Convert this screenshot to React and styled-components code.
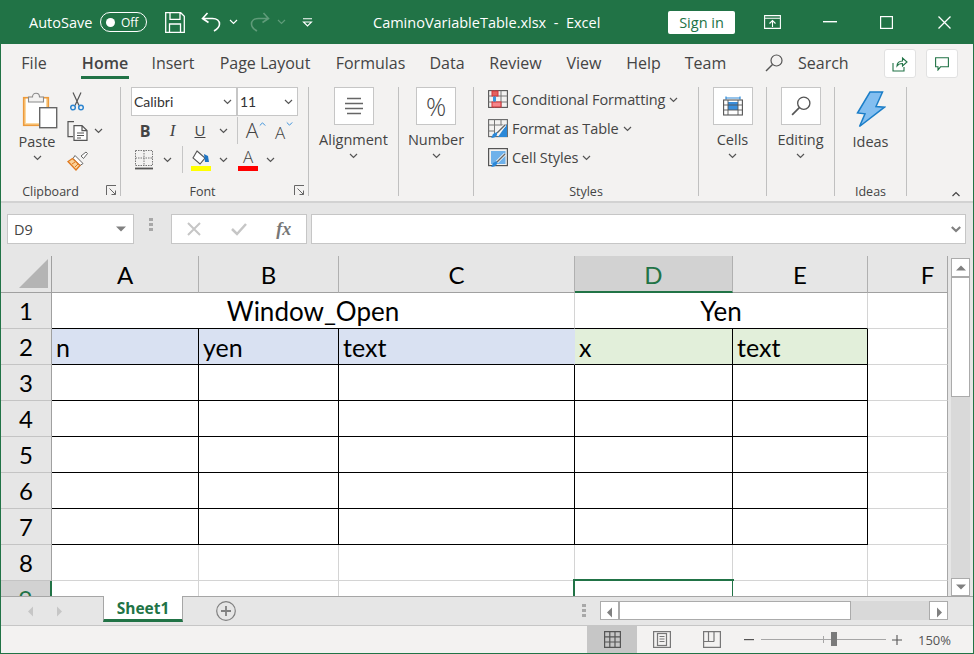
import React from "react";
import styled, { createGlobalStyle } from "styled-components";

const UI_FONT = `"Open Sans", "Noto Sans", "Liberation Sans", sans-serif`;
const CELL_FONT = `Lato, "Open Sans", "Liberation Sans", sans-serif`;
const GREEN = "#217346";
const GRID = "#d4d4d4";

const Global = createGlobalStyle`
  html, body { margin: 0; padding: 0; background: #fff; overflow: hidden; }
  * { box-sizing: border-box; }
`;

const Win = styled.div`
  width: 974px;
  height: 654px;
  display: flex;
  flex-direction: column;
  background: #f3f2f1;
  border-left: 1px solid ${GREEN};
  border-right: 1px solid ${GREEN};
  border-bottom: 1px solid ${GREEN};
  font-family: ${UI_FONT};
  color: #444;
  overflow: hidden;
`;

/* title bar */
const TitleBar = styled.div`
  height: 44px;
  flex: none;
  margin: 0 -1px;
  background: ${GREEN};
  color: #fff;
  display: flex;
  align-items: center;
  padding-left: 29px;
  font-size: 14.5px;
`;
const AutoSave = styled.span`
  width: 71px;
`;
const Toggle = styled.div`
  width: 47px;
  height: 20px;
  border: 1px solid #fff;
  border-radius: 10px;
  display: flex;
  align-items: center;
  padding-left: 5px;
  gap: 6px;
  font-size: 12px;
  margin-right: 14px;
  &::before {
    content: "";
    width: 9px;
    height: 9px;
    border-radius: 50%;
    background: #fff;
  }
`;
const QSlot = styled.div`
  width: ${(p) => p.$w}px;
  display: flex;
  justify-content: center;
  align-items: center;
  flex: none;
`;
const DocTitle = styled.div`
  width: 300px;
  padding-left: 5px;
  white-space: pre;
`;
const SignIn = styled.div`
  width: 67px;
  height: 23px;
  background: #fff;
  color: ${GREEN};
  border-radius: 2px;
  display: flex;
  align-items: center;
  justify-content: center;
  font-size: 14.5px;
`;

/* tabs */
const TabBar = styled.div`
  height: 36px;
  flex: none;
  display: flex;
  align-items: center;
  gap: 24px;
  padding-left: 21px;
  font-size: 16px;
`;
const Tab = styled.div`
  width: ${(p) => p.$w}px;
  height: 36px;
  display: flex;
  justify-content: center;
  align-items: center;
  padding-top: 2px;
  position: relative;
  white-space: nowrap;
  flex: none;
  font-weight: ${(p) => (p.$active ? 600 : 400)};
  margin-right: ${(p) => p.$mr || 0}px;
  ${(p) =>
    p.$active &&
    `&::after {
      content: "";
      position: absolute;
      left: -1px;
      right: -1px;
      bottom: 1px;
      height: 3px;
      background: ${GREEN};
    }`}
`;
const SearchBox = styled.div`
  display: flex;
  align-items: center;
  gap: 15px;
  margin-left: 15px;
  padding-top: 2px;
  width: 95px;
`;
const TabButton = styled.div`
  width: 32px;
  height: 29px;
  background: #fff;
  border: 1px solid #e1e1e1;
  border-radius: 3px;
  display: flex;
  align-items: center;
  justify-content: center;
  flex: none;
  margin-top: 3px;
  margin-left: ${(p) => p.$ml || 0}px;
`;

/* ribbon */
const Ribbon = styled.div`
  height: 123px;
  flex: none;
  display: flex;
  padding-top: 7px;
  border-bottom: 2px solid #d2d2d2;
  font-size: 14.5px;
`;
const Group = styled.div`
  width: ${(p) => p.$w}px;
  height: 109px;
  flex: none;
  border-right: 1px solid #c0c0c0;
  display: flex;
  flex-direction: column;
  position: relative;
`;
const GroupBody = styled.div`
  height: 97px;
  flex: none;
  display: flex;
  padding-left: ${(p) => p.$pl || 0}px;
  flex-direction: ${(p) => (p.$col ? "column" : "row")};
`;
const GroupLabel = styled.div`
  height: 12px;
  font-size: 12.5px;
  line-height: 15px;
  text-align: center;
  white-space: nowrap;
  padding-right: ${(p) => p.$pr || 0}px;
`;
const Launcher = styled.svg`
  position: absolute;
  right: 3px;
  bottom: 0;
`;
const PasteCol = styled.div`
  width: ${(p) => p.$w || "72px"};
  display: flex;
  flex-direction: column;
  align-items: center;
  padding-top: 4px;
  flex: none;
`;
const BigLabel = styled.div`
  line-height: 20px;
  margin-top: ${(p) => p.$mt ?? 3}px;
  white-space: nowrap;
`;
const PasteArt = styled.div`
  margin-left: 5px;
  height: 38px;
`;
const Caret = styled.div`
  height: 12px;
  display: flex;
  align-items: center;
  justify-content: center;
`;
const ClipCol = styled.div`
  display: flex;
  flex-direction: column;
  width: 46px;
  margin-left: -6px;
`;
const ClipRow = styled.div`
  height: 29.5px;
  display: flex;
  align-items: center;
  gap: 6px;
  padding-left: ${(p) => p.$pl || 0}px;
`;
const FontRow = styled.div`
  height: ${(p) => p.$h || 29}px;
  display: flex;
  align-items: center;
`;
const Combo = styled.div`
  width: ${(p) => p.$w}px;
  height: 29px;
  background: #fff;
  border: 1px solid #c6c6c6;
  display: flex;
  align-items: center;
  justify-content: space-between;
  padding: 0 4px 0 2px;
  font-family: ${CELL_FONT};
  font-size: 14px;
  color: #333;
`;
const Slot = styled.div`
  width: ${(p) => p.$w}px;
  height: 29px;
  flex: none;
  display: flex;
  align-items: center;
  justify-content: center;
`;
const GrowSlot = styled(Slot)`
  align-items: flex-end;
  padding-bottom: 4px;
  gap: 1px;
  & > svg {
    align-self: flex-start;
    margin-top: 5px;
  }
`;
const FontGlyph = styled.span`
  font-family: ${(p) => (p.$serif ? `"Liberation Serif", serif` : UI_FONT)};
  font-weight: ${(p) => (p.$bold ? 700 : p.$thin ? 300 : 400)};
  font-style: ${(p) => (p.$italic ? "italic" : "normal")};
  font-size: ${(p) => p.$size || 15}px;
  text-decoration: ${(p) => (p.$under ? "underline" : "none")};
  color: #444;
  line-height: 1;
`;
const ColorSlot = styled(Slot)`
  flex-direction: column;
  justify-content: flex-end;
  gap: 1px;
  padding-bottom: 3px;
`;
const ColorBar = styled.div`
  width: 20px;
  height: 5px;
  flex: none;
  background: ${(p) => p.$c};
`;
const VRule = styled.div`
  width: 1px;
  height: 27px;
  background: #c6c6c6;
  margin: 0 ${(p) => p.$r || 5}px 0 ${(p) => p.$l || 5}px;
  flex: none;
`;
const BigCol = styled.div`
  width: 100%;
  display: flex;
  flex-direction: column;
  align-items: center;
`;
const IconBox = styled.div`
  width: 40px;
  height: 38px;
  background: #fff;
  border: 1px solid #c6c6c6;
  display: flex;
  align-items: center;
  justify-content: center;
  flex: none;
  font-size: 25px;
  font-weight: 300;
  color: #444;
`;
const StyleList = styled.div`
  margin-top: -2px;
  padding-left: 14px;
`;
const StyleRow = styled.div`
  height: 29px;
  display: flex;
  align-items: center;
  gap: 4px;
  white-space: nowrap;
  letter-spacing: -0.1px;
`;
const Collapse = styled.div`
  align-self: flex-end;
  margin-left: 43px;
  margin-bottom: 4px;
  display: flex;
`;

/* formula bar */
const FormulaBar = styled.div`
  height: 53px;
  flex: none;
  background: #e6e6e6;
  display: flex;
  padding: 11px 0 0 6px;
`;
const FBox = styled.div`
  width: ${(p) => p.$w}px;
  height: 30px;
  background: #fff;
  border: 1px solid #c6c6c6;
  display: flex;
  align-items: center;
  flex: none;
  margin-left: ${(p) => p.$ml || 0}px;
`;
const NameBox = styled(FBox)`
  justify-content: space-between;
  padding: 0 6px;
  font-size: 14.5px;
  color: #444;
`;
const FormulaInput = styled(FBox)`
  justify-content: flex-end;
  padding-right: 4px;
`;
const FxSlot = styled.div`
  width: 45px;
  display: flex;
  justify-content: center;
  align-items: center;
  font-family: "Liberation Serif", serif;
  font-style: italic;
  font-weight: 700;
  font-size: 18px;
  color: #777;
`;
const Dots = styled.div`
  width: 5px;
  display: flex;
  flex-direction: column;
  gap: 2px;
  margin: ${(p) => p.$m};
  & > i {
    width: 4px;
    height: 3px;
    background: #a8a8a8;
  }
`;

/* sheet */
const SheetArea = styled.div`
  height: 340px;
  flex: none;
  display: flex;
  background: #e6e6e6;
  overflow: hidden;
`;
const Sheet = styled.div`
  width: 947px;
  flex: none;
  display: grid;
  grid-template-columns: 51px 147px 140px 236px 158px 135px 80px;
  grid-auto-rows: 36px;
  grid-template-rows: 37px;
  font-family: ${CELL_FONT};
  font-size: 24px;
  color: #000;
  background: #fff;
  align-content: start;
`;
const Corner = styled.div`
  background: #e6e6e6;
  border-bottom: 1px solid #a0a0a0;
  border-right: 1px solid #a0a0a0;
  display: flex;
  align-items: flex-end;
  justify-content: flex-end;
  padding: 0 2px 3px 0;
`;
const ColHead = styled.div`
  background: ${(p) => (p.$sel ? "#d2d2d2" : "#e6e6e6")};
  color: ${(p) => (p.$sel ? GREEN : "#000")};
  border-right: 1px solid #b0b0b0;
  border-bottom: ${(p) => (p.$sel ? `2px solid ${GREEN}` : "1px solid #a0a0a0")};
  display: flex;
  align-items: center;
  justify-content: center;
  padding-top: ${(p) => (p.$sel ? 1 : 0)}px;
  ${(p) => p.$last && "padding-left: 40px; border-right: 1px solid #a6a6a6;"}
`;
const RowHead = styled.div`
  background: ${(p) => (p.$sel ? "#d2d2d2" : "#e6e6e6")};
  color: ${(p) => (p.$sel ? GREEN : "#000")};
  border-right: ${(p) => (p.$sel ? `2px solid ${GREEN}` : "1px solid #a0a0a0")};
  border-bottom: 1px solid #c4c4c4;
  display: flex;
  align-items: center;
  justify-content: center;
`;
const Cell = styled.div`
  grid-column: ${(p) => (p.$span ? `span ${p.$span}` : "auto")};
  background: ${(p) => p.$bg || "#fff"};
  border-right: 1px solid ${(p) => p.$r || GRID};
  border-bottom: 1px solid ${(p) => p.$b || GRID};
  display: flex;
  align-items: center;
  justify-content: ${(p) => (p.$center ? "center" : "flex-start")};
  padding-left: ${(p) => (p.$center ? 0 : 4)}px;
  font-size: ${(p) => (p.$center ? 26 : 25)}px;
  white-space: nowrap;
  position: relative;
  ${(p) => p.$edge && "border-right: 1px solid #a6a6a6;"}
`;
const Selected = styled.div`
  position: absolute;
  left: -2px;
  top: -2px;
  right: -2px;
  bottom: -2px;
  border: 2px solid ${GREEN};
`;
const VScroll = styled.div`
  width: 25px;
  flex: none;
  padding: 2px 3px 0 3px;
  display: flex;
  flex-direction: column;
`;
const ScrollBtn = styled.div`
  width: ${(p) => p.$w || 19}px;
  height: ${(p) => p.$h || 19}px;
  background: #fff;
  border: 1px solid #ababab;
  display: flex;
  align-items: center;
  justify-content: center;
  flex: none;
`;
const VTrack = styled.div`
  height: 302px;
  background: #d9d9d9;
  width: 19px;
`;
const VThumb = styled.div`
  height: 120px;
  background: #fff;
  border: 1px solid #ababab;
`;

/* sheet tabs */
const SheetBar = styled.div`
  height: 30px;
  flex: none;
  background: #e6e6e6;
  border-top: 1px solid #a6a6a6;
  border-bottom: 1px solid #c6c6c6;
  display: flex;
  align-items: flex-start;
`;
const NavArrows = styled.div`
  width: 102px;
  height: 28px;
  display: flex;
  align-items: center;
  gap: 16px;
  padding-left: 24px;
  flex: none;
  padding-bottom: 2px;
`;
const SheetTab = styled.div`
  width: 80px;
  height: 26px;
  margin-top: -1px;
  background: #fff;
  border-left: 1px solid #a6a6a6;
  border-right: 1px solid #a6a6a6;
  border-bottom: 3px solid ${GREEN};
  color: ${GREEN};
  font-weight: 700;
  font-size: 15.5px;
  display: flex;
  align-items: center;
  justify-content: center;
  flex: none;
`;
const AddSheet = styled.div`
  width: 85px;
  display: flex;
  justify-content: center;
  padding-top: 4px;
  flex: none;
`;
const HScroll = styled.div`
  display: flex;
  margin-top: 4px;
  margin-left: ${(p) => p.$ml}px;
`;
const HThumb = styled.div`
  width: 232px;
  height: 19px;
  background: #fff;
  border: 1px solid #ababab;
  flex: none;
`;
const HTrack = styled.div`
  width: 78px;
  height: 19px;
  background: #d9d9d9;
  flex: none;
`;

/* status bar */
const StatusBar = styled.div`
  flex: 1;
  display: flex;
  align-items: center;
  padding-left: 586px;
  font-size: 13px;
  color: #555;
`;
const ViewBtn = styled.div`
  width: 50px;
  height: 100%;
  display: flex;
  align-items: center;
  justify-content: center;
  flex: none;
  background: ${(p) => (p.$on ? "#c6c6c6" : "transparent")};
`;
const ZoomBar = styled.div`
  display: flex;
  align-items: center;
  margin-left: 7px;
`;
const Slider = styled.div`
  width: 125px;
  height: 1px;
  background: #a6a6a6;
  margin: 0 6px 0 7px;
  position: relative;
`;
const SliderTick = styled.i`
  position: absolute;
  left: 62px;
  top: -3px;
  width: 1px;
  height: 7px;
  background: #a6a6a6;
`;
const SliderKnob = styled.i`
  position: absolute;
  left: 70px;
  top: -7px;
  width: 6px;
  height: 14px;
  background: #7a7a7a;
`;
const ZoomPct = styled.span`
  margin-left: 16px;
`;

const Chev = ({ c = "#555", w = 9, up }) => (
  <svg width={w} height="6" viewBox="0 0 9 6" fill="none" stroke={c} strokeWidth="1.2" style={{ flex: "none" }}>
    <path d={up ? "M1 5l3.5-3.5L8 5" : "M1 1l3.5 3.5L8 1"} />
  </svg>
);

const ThickChev = () => (
  <svg width="10" height="7" viewBox="0 0 10 7" fill="none" stroke="#808080" strokeWidth="2.2">
    <path d="M.8 1l4.200 4 4.200-4" />
  </svg>
);

const Tri = ({ dir, c = "#808080" }) => {
  const pts = { up: "1,7 6,2 11,7", down: "1,2 6,7 11,2", left: "8,1 3,6 8,11", right: "4,1 9,6 4,11" };
  return (
    <svg width="12" height="12" viewBox="0 0 12 9" style={{ overflow: "visible" }}>
      <polygon points={pts[dir]} fill={c} />
    </svg>
  );
};

const Lnch = () => (
  <Launcher width="12" height="12" viewBox="0 0 12 12" fill="none" stroke="#666" strokeWidth="1">
    <path d="M1.5 11V1.5H11M4.5 4.5L10.5 10.5M10.5 6.5v4h-4" />
  </Launcher>
);

const SaveIcon = () => (
  <svg width="20" height="21" viewBox="0 0 20 21" fill="none" stroke="#fff" strokeWidth="1.3">
    <path d="M.7.7h15l3.6 3.6v16H.7zM5 .7v6.6h10V.7M4.5 20.3V12h11v8.300" />
  </svg>
);
const UndoIcon = ({ c = "#fff" }) => (
  <svg width="20" height="20" viewBox="0 0 20 20" fill="none" stroke={c} strokeWidth="1.6">
    <path d="M6.500 1L1.500 6.500l6 4M2 6.500h9.500c4.500 0 7 2.500 7 5.500 0 3-2 5-5.500 7" />
  </svg>
);
const RedoIcon = ({ c = "#5f9b79" }) => (
  <svg width="20" height="20" viewBox="0 0 20 20" fill="none" stroke={c} strokeWidth="1.6">
    <path d="M13.500 1l5 5.500-6 4M18 6.500H8.500c-4.500 0-7 2.500-7 5.500 0 3 2 5 5.500 7" />
  </svg>
);
const Customize = () => (
  <svg width="11" height="9" viewBox="0 0 11 9" fill="none" stroke="#fff" strokeWidth="1.100">
    <path d="M1 .7h9M1.500 4l4 4 4-4z" />
  </svg>
);
const RibbonMode = () => (
  <svg width="17" height="14" viewBox="0 0 17 14" fill="none" stroke="#fff" strokeWidth="1.100">
    <path d="M.6 .6h15.800v12.800H.6zM.6 3.200h15.800M8.500 12V5.500M5.500 8.500l3-3 3 3" />
  </svg>
);
const MinIcon = () => (
  <svg width="14" height="2" viewBox="0 0 14 2"><rect width="14" height="1.400" fill="#fff" /></svg>
);
const MaxIcon = () => (
  <svg width="13" height="13" viewBox="0 0 13 13" fill="none" stroke="#fff" strokeWidth="1.200"><rect x=".6" y=".6" width="11.800" height="11.800" /></svg>
);
const CloseIcon = () => (
  <svg width="13" height="13" viewBox="0 0 13 13" fill="none" stroke="#fff" strokeWidth="1.300"><path d="M.5.5l12 12M12.500.5l-12 12" /></svg>
);

const SearchIcon = ({ s = 18, c = "#555" }) => (
  <svg width={s} height={s} viewBox="0 0 18 18" fill="none" stroke={c} strokeWidth="1.200">
    <circle cx="11.500" cy="6.500" r="5.500" />
    <path d="M7.500 10.500L1 17" strokeWidth="1.500" />
  </svg>
);
const ShareIcon = () => (
  <svg width="16" height="16" viewBox="0 0 16 16" fill="none" stroke={GREEN} strokeWidth="1.100">
    <path d="M1 7v8h11v-4M5 10c0-3 2-5 5.500-5V2L15 6l-4.500 4V7.500C8 7.500 6 8.500 5 10z" />
  </svg>
);
const CommentIcon = () => (
  <svg width="14" height="14" viewBox="0 0 14 14" fill="none" stroke={GREEN} strokeWidth="1.100">
    <path d="M.6.8h12.800v9H5.500L3 13v-3.200H.6z" />
  </svg>
);

const PasteIcon = () => (
  <svg width="36" height="38" viewBox="0 0 36 38">
    <rect x="1" y="6" width="26" height="29" fill="#fcd9a0" />
    <rect x="4" y="7" width="20" height="25" fill="#fff" />
    <rect x="1.700" y="6.700" width="24.600" height="27.600" fill="none" stroke="#ed9a3b" strokeWidth="1.600" />
    <path d="M6.500 11V6h4c0-5 7-5 7 0h4v5z" fill="#f3f2f1" stroke="#8a8a8a" strokeWidth="1.100" />
    <rect x="17.700" y="16.700" width="17" height="20" fill="#fff" stroke="#666" strokeWidth="1.400" />
  </svg>
);
const ScissorsIcon = () => (
  <svg width="14" height="19" viewBox="0 0 14 19" fill="none" strokeWidth="1.200">
    <path d="M3 .5l6 13M11 .5l-6 13" stroke="#555" />
    <circle cx="3" cy="15.500" r="2.300" stroke="#2e86d0" strokeWidth="1.500" />
    <circle cx="11" cy="15.500" r="2.300" stroke="#2e86d0" strokeWidth="1.500" />
  </svg>
);
const CopyIcon = () => (
  <svg width="21" height="20" viewBox="0 0 21 20" fill="none" stroke="#555" strokeWidth="1.200">
    <path d="M7 .6H1v15h5" />
    <path d="M7 4.600h8l5 5v9.800H7zM15 4.600v5h5" fill="#fff" />
    <path d="M10 12h7M10 14.500h7M10 17h4" strokeWidth="1" />
  </svg>
);
const PainterIcon = () => (
  <svg width="21" height="20" viewBox="0 0 21 20">
    <path d="M14 5l5-4 1.500 1.500-4 5z" fill="#fff" stroke="#666" />
    <path d="M8 4.500l8 8-3 2-7-7z" fill="#fff" stroke="#666" />
    <path d="M5.500 7.500L1 10.500l8 8.500 4-4.500z" fill="#fad29a" stroke="#e07a1f" strokeWidth="1.300" />
    <path d="M5 13l3-2M8 16l3-3" stroke="#e07a1f" />
  </svg>
);
const BorderIcon = () => (
  <svg width="19" height="20" viewBox="0 0 19 20" fill="none" stroke="#777" strokeWidth="1" strokeDasharray="1.500 1">
    <rect x=".5" y=".5" width="17" height="15" />
    <path d="M9 .5v15M.5 8h17" />
    <path d="M0 18.500h18" strokeDasharray="none" strokeWidth="1.800" stroke="#555" />
  </svg>
);
const FillIcon = () => (
  <svg width="20" height="15" viewBox="0 0 20 15">
    <path d="M6 1l8 7-5 6-7-6z" fill="#fff" stroke="#555" strokeWidth="1.100" />
    <path d="M13 4l4 2 1 6h-4z" fill="#1f75c4" />
  </svg>
);
const AlignIcon = () => (
  <svg width="18" height="18" viewBox="0 0 18 18" stroke="#666" strokeWidth="1.300">
    <path d="M2 1.500h14M0 6.500h18M0 11.500h18M2 16.500h14" />
  </svg>
);
const CondIcon = () => (
  <svg width="20" height="20" viewBox="0 0 20 20" fill="none">
    <rect x=".6" y=".6" width="18.800" height="16.800" stroke="#555" strokeWidth="1.100" />
    <path d="M.6 6h18.800M.6 12h18.800M6.500.6v17M13 .6v17" stroke="#777" />
    <rect x="4" y="1" width="6" height="5" fill="#e2625f" stroke="#d13438" />
    <rect x="4" y="12" width="9" height="5" fill="#f4868a" stroke="#d13438" />
    <rect x="5" y="6.500" width="3" height="5" fill="#3a96dd" />
  </svg>
);
const TableIcon = () => (
  <svg width="20" height="20" viewBox="0 0 20 20" fill="none">
    <rect x=".6" y=".6" width="18.800" height="17" stroke="#666" strokeWidth="1.100" />
    <path d="M.6 6h18.800M.6 12h6M6.500.6v17M13 .6V6" stroke="#777" />
    <path d="M19 5v13h-9z" fill="#2b88d8" />
    <path d="M17 6l-8 8" stroke="#fff" strokeWidth="3" />
    <path d="M17 6l-8 8" stroke="#666" strokeWidth="1.500" />
    <path d="M9 13l-4 2c-1 2-1 3-2 4 3 0 5-1 6-3z" fill="#2b88d8" />
  </svg>
);
const CellStyleIcon = () => (
  <svg width="20" height="20" viewBox="0 0 20 20" fill="none">
    <rect x=".6" y=".6" width="18.800" height="17" stroke="#555" strokeWidth="1.200" />
    <rect x="3" y="3" width="14.500" height="13" fill="#6fb1ea" />
    <path d="M17 6l-8 8" stroke="#fff" strokeWidth="3" />
    <path d="M17 6l-8 8" stroke="#666" strokeWidth="1.500" />
    <path d="M9 13l-4 2c-1 2-1 3-2 4 3 0 5-1 6-3z" fill="#2b88d8" />
  </svg>
);
const CellsIcon = () => (
  <svg width="20" height="20" viewBox="0 0 20 20" fill="none">
    <path d="M3 2h14M3 .5v3M17 .5v3" stroke="#2e8ad8" strokeWidth="1.200" />
    <rect x=".6" y="4" width="18.800" height="15" stroke="#555" strokeWidth="1.100" />
    <rect x="5" y="6" width="10" height="8" fill="#3a8edb" />
    <path d="M.6 9h18.800M.6 14h18.800M5 4v15M15 4v15" stroke="#555" strokeWidth=".9" />
  </svg>
);
const IdeasIcon = () => (
  <svg width="30" height="38" viewBox="0 0 30 38">
    <path d="M14 1h12.500L20 15.500l8.500.7L3.500 35.500 9 22.800 1.500 22z" fill="#83bef0" stroke="#1b7ec8" strokeWidth="1.500" strokeLinejoin="miter" />
  </svg>
);
const GridView = () => (
  <svg width="17" height="17" viewBox="0 0 17 17" fill="none" stroke="#555" strokeWidth="1.200">
    <path d="M.6.6h15.800v15.800H.6zM.6 5.800h15.800M.6 11h15.800M5.800.6v15.800M11 .6v15.800" />
  </svg>
);
const PageView = () => (
  <svg width="18" height="17" viewBox="0 0 18 17" fill="none" stroke="#777" strokeWidth="1.200">
    <rect x=".6" y=".6" width="16.800" height="15.800" />
    <rect x="4.500" y="2.500" width="9" height="12" />
    <path d="M6.500 5.500h5M6.500 8h5M6.500 10.500h5" strokeWidth="1" />
  </svg>
);
const BreakView = () => (
  <svg width="18" height="17" viewBox="0 0 18 17" fill="none" stroke="#777" strokeWidth="1.200">
    <path d="M.6.6h16.800v15.800H.6zM.6 10.500h10.500M5.500.6v10M11 .6v10" />
  </svg>
);
const PlusCircle = () => (
  <svg width="20" height="20" viewBox="0 0 20 20" fill="none" stroke="#808080">
    <circle cx="10" cy="10" r="9.300" strokeWidth="1.200" />
    <path d="M5 10h10M10 5v10" strokeWidth="1.800" />
  </svg>
);

const colNames = ["A", "B", "C", "D", "E", "F"];
const BLUE = "#d9e1f2";
const LIME = "#e2efda";

// body rows of the table, 3 to 7 are empty with black borders
const tableRows = [3, 4, 5, 6, 7];

const BigButton = ({ icon, label }) => (
  <BigCol>
    <IconBox>{icon}</IconBox>
    <BigLabel $mt={5}>{label}</BigLabel>
    <Caret><Chev /></Caret>
  </BigCol>
);

export default function App() {
  return (
    <Win>
      <Global />
      <TitleBar>
        <AutoSave>AutoSave</AutoSave>
        <Toggle>Off</Toggle>
        <QSlot $w={28}><SaveIcon /></QSlot>
        <QSlot $w={12} />
        <QSlot $w={20}><UndoIcon /></QSlot>
        <QSlot $w={24}><Chev c="#fff" /></QSlot>
        <QSlot $w={5} />
        <QSlot $w={20}><RedoIcon /></QSlot>
        <QSlot $w={22}><Chev c="#5f9b79" /></QSlot>
        <QSlot $w={10} />
        <QSlot $w={11}><Customize /></QSlot>
        <QSlot $w={55} />
        <DocTitle>CaminoVariableTable.xlsx  -  Excel</DocTitle>
        <SignIn>Sign in</SignIn>
        <QSlot $w={29} />
        <QSlot $w={17}><RibbonMode /></QSlot>
        <QSlot $w={42} />
        <QSlot $w={14}><MinIcon /></QSlot>
        <QSlot $w={43} />
        <QSlot $w={13}><MaxIcon /></QSlot>
        <QSlot $w={45} />
        <QSlot $w={13}><CloseIcon /></QSlot>
      </TitleBar>

      <TabBar>
        <Tab $w={24} $mr={12}>File</Tab>
        <Tab $w={46} $active>Home</Tab>
        <Tab $w={42}>Insert</Tab>
        <Tab $w={94}>Page Layout</Tab>
        <Tab $w={69}>Formulas</Tab>
        <Tab $w={36}>Data</Tab>
        <Tab $w={53}>Review</Tab>
        <Tab $w={36}>View</Tab>
        <Tab $w={35}>Help</Tab>
        <Tab $w={41}>Team</Tab>
        <SearchBox><SearchIcon />Search</SearchBox>
        <TabButton><ShareIcon /></TabButton>
        <TabButton $ml={-14}><CommentIcon /></TabButton>
      </TabBar>

      <Ribbon>
        <Group $w={120}>
          <GroupBody>
            <PasteCol>
              <PasteArt><PasteIcon /></PasteArt>
              <BigLabel>Paste</BigLabel>
              <Caret><Chev /></Caret>
            </PasteCol>
            <ClipCol>
              <ClipRow $pl={2}><Slot $w={16}><ScissorsIcon /></Slot></ClipRow>
              <ClipRow><CopyIcon /><Chev /></ClipRow>
              <ClipRow><PainterIcon /></ClipRow>
            </ClipCol>
          </GroupBody>
          <GroupLabel $pr={20}>Clipboard</GroupLabel>
          <Lnch />
        </Group>

        <Group $w={188}>
          <GroupBody $col $pl={10}>
            <FontRow>
              <Combo $w={106}>Calibri<Chev /></Combo>
              <Combo $w={61}>11<Chev /></Combo>
            </FontRow>
            <FontRow>
              <Slot $w={28}><FontGlyph $bold $size={16}>B</FontGlyph></Slot>
              <Slot $w={27}><FontGlyph $serif $italic $size={17}>I</FontGlyph></Slot>
              <Slot $w={28}><FontGlyph $under $size={15}>U</FontGlyph></Slot>
              <Slot $w={18}><Chev /></Slot>
              <VRule $l={5} $r={4} />
              <GrowSlot $w={28}><FontGlyph $thin $size={21}>A</FontGlyph><Chev c="#2e8ad8" w={7} up /></GrowSlot>
              <GrowSlot $w={28}><FontGlyph $thin $size={17}>A</FontGlyph><Chev c="#2e8ad8" w={7} /></GrowSlot>
            </FontRow>
            <FontRow>
              <Slot $w={27}><BorderIcon /></Slot>
              <Slot $w={18}><Chev /></Slot>
              <VRule $l={6} $r={4} />
              <ColorSlot $w={28}><FillIcon /><ColorBar $c="#ffff00" /></ColorSlot>
              <Slot $w={17}><Chev /></Slot>
              <ColorSlot $w={32}><FontGlyph $thin $size={17}>A</FontGlyph><ColorBar $c="#ff0000" /></ColorSlot>
              <Slot $w={12}><Chev /></Slot>
            </FontRow>
          </GroupBody>
          <GroupLabel $pr={24}>Font</GroupLabel>
          <Lnch />
        </Group>

        <Group $w={90}>
          <GroupBody><BigButton icon={<AlignIcon />} label="Alignment" /></GroupBody>
        </Group>
        <Group $w={75}>
          <GroupBody><BigButton icon="%" label="Number" /></GroupBody>
        </Group>

        <Group $w={225}>
          <GroupBody>
            <StyleList>
              <StyleRow><CondIcon />Conditional Formatting <Chev /></StyleRow>
              <StyleRow><TableIcon />Format as Table <Chev /></StyleRow>
              <StyleRow><CellStyleIcon />Cell Styles <Chev /></StyleRow>
            </StyleList>
          </GroupBody>
          <GroupLabel>Styles</GroupLabel>
        </Group>

        <Group $w={68}>
          <GroupBody><BigButton icon={<CellsIcon />} label="Cells" /></GroupBody>
        </Group>
        <Group $w={68}>
          <GroupBody><BigButton icon={<SearchIcon s={20} />} label="Editing" /></GroupBody>
        </Group>
        <Group $w={72}>
          <GroupBody>
            <PasteCol $w="100%">
              <IdeasIcon />
              <BigLabel>Ideas</BigLabel>
            </PasteCol>
          </GroupBody>
          <GroupLabel>Ideas</GroupLabel>
        </Group>
        <Collapse><Chev w={12} c="#444" up /></Collapse>
      </Ribbon>

      <FormulaBar>
        <NameBox $w={127}>D9<Tri dir="down" /></NameBox>
        <Dots $m="4px 0 0 15px"><i /><i /><i /></Dots>
        <FBox $w={136} $ml={17}>
          <FxSlot><svg width="14" height="14" viewBox="0 0 14 14" stroke="#c6c6c6" strokeWidth="2"><path d="M1 1l12 12M13 1L1 13" /></svg></FxSlot>
          <FxSlot><svg width="16" height="14" viewBox="0 0 16 14" fill="none" stroke="#c6c6c6" strokeWidth="2.500"><path d="M1 7l5 5L15 2" /></svg></FxSlot>
          <FxSlot>fx</FxSlot>
        </FBox>
        <FormulaInput $w={655} $ml={4}><ThickChev /></FormulaInput>
      </FormulaBar>

      <SheetArea>
        <Sheet>
          <Corner>
            <svg width="30" height="30" viewBox="0 0 30 30"><polygon points="0,29 29,0 29,29" fill="#b4b4b4" /></svg>
          </Corner>
          {colNames.map((c) => (
            <ColHead key={c} $sel={c === "D"} $last={c === "F"}>{c}</ColHead>
          ))}

          <RowHead>1</RowHead>
          <Cell $span={3} $center $b="#000">Window_Open</Cell>
          <Cell $span={2} $center $b="#000">Yen</Cell>
          <Cell $edge />

          <RowHead>2</RowHead>
          <Cell $bg={BLUE} $r="#000" $b="#000">n</Cell>
          <Cell $bg={BLUE} $r="#000" $b="#000">yen</Cell>
          <Cell $bg={BLUE} $r={BLUE} $b="#000">text</Cell>
          <Cell $bg={LIME} $r="#000" $b="#000">x</Cell>
          <Cell $bg={LIME} $r="#000" $b="#000">text</Cell>
          <Cell $edge />

          {tableRows.map((r) => (
            <React.Fragment key={r}>
              <RowHead>{r}</RowHead>
              <Cell $r="#000" $b="#000" />
              <Cell $r="#000" $b="#000" />
              <Cell $r="#000" $b="#000" />
              <Cell $r="#000" $b="#000" />
              <Cell $r="#000" $b="#000" />
              <Cell $edge />
            </React.Fragment>
          ))}

          <RowHead>8</RowHead>
          <Cell /><Cell /><Cell /><Cell /><Cell /><Cell $edge />

          <RowHead $sel>9</RowHead>
          <Cell /><Cell /><Cell />
          <Cell><Selected /></Cell>
          <Cell /><Cell $edge />
        </Sheet>
        <VScroll>
          <ScrollBtn><Tri dir="up" /></ScrollBtn>
          <VTrack><VThumb /></VTrack>
          <ScrollBtn $h={18}><Tri dir="down" /></ScrollBtn>
        </VScroll>
      </SheetArea>

      <SheetBar>
        <NavArrows><Tri dir="left" c="#c6c6c6" /><Tri dir="right" c="#c6c6c6" /></NavArrows>
        <SheetTab>Sheet1</SheetTab>
        <AddSheet><PlusCircle /></AddSheet>
        <Dots $m="7px 0 0 314px"><i /><i /><i /></Dots>
        <HScroll $ml={13}>
          <ScrollBtn><Tri dir="left" /></ScrollBtn>
          <HThumb />
          <HTrack />
          <ScrollBtn><Tri dir="right" /></ScrollBtn>
        </HScroll>
      </SheetBar>

      <StatusBar>
        <ViewBtn $on><GridView /></ViewBtn>
        <ViewBtn><PageView /></ViewBtn>
        <ViewBtn><BreakView /></ViewBtn>
        <ZoomBar>
          <svg width="10" height="2" viewBox="0 0 10 2"><rect width="10" height="1.200" fill="#555" /></svg>
          <Slider><SliderTick /><SliderKnob /></Slider>
          <svg width="10" height="10" viewBox="0 0 10 10" stroke="#555" strokeWidth="1.100"><path d="M0 5h10M5 0v10" /></svg>
          <ZoomPct>150%</ZoomPct>
        </ZoomBar>
      </StatusBar>
    </Win>
  );
}
